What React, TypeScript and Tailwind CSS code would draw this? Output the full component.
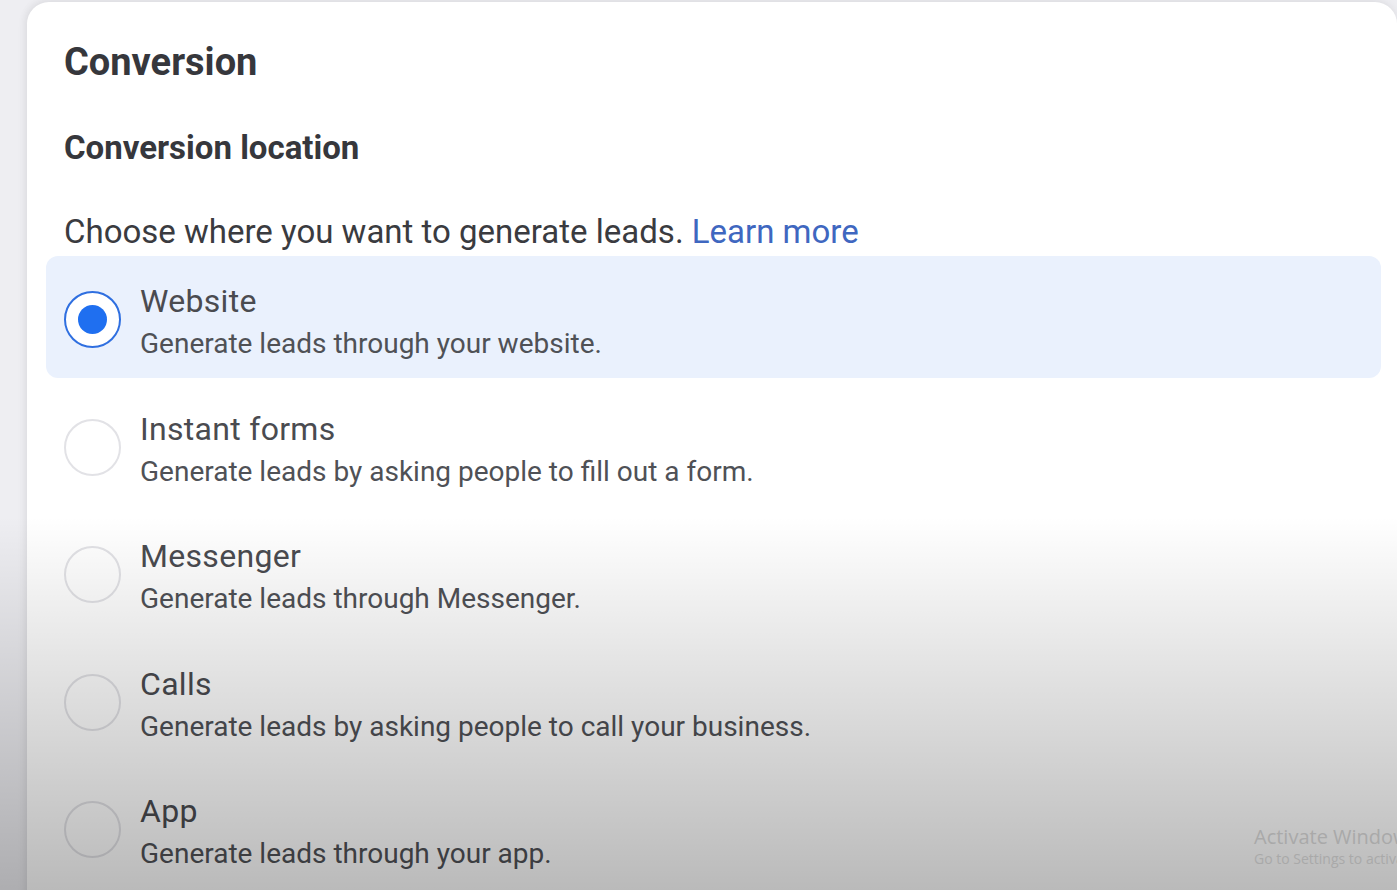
import React from 'react';

type Option = {
  id: string;
  title: string;
  description: string;
};

const options: Option[] = [
  { id: 'website', title: 'Website', description: 'Generate leads through your website.' },
  { id: 'instant-forms', title: 'Instant forms', description: 'Generate leads by asking people to fill out a form.' },
  { id: 'messenger', title: 'Messenger', description: 'Generate leads through Messenger.' },
  { id: 'calls', title: 'Calls', description: 'Generate leads by asking people to call your business.' },
  { id: 'app', title: 'App', description: 'Generate leads through your app.' },
];

function Radio({ checked }: { checked: boolean }) {
  if (checked) {
    return (
      <span className="flex h-[57px] w-[57px] shrink-0 items-center justify-center rounded-full border-[2.5px] border-[#2f6fe0] bg-white">
        <span className="block h-[29px] w-[29px] rounded-full bg-[#1f6ff0]" />
      </span>
    );
  }
  return <span className="block h-[57px] w-[57px] shrink-0 rounded-full border-2 border-[#e2e2e6] bg-white" />;
}

export default function App() {
  const selected = 'website';

  return (
    <div
      className="relative h-[890px] w-full overflow-hidden bg-[#eeeef2] pl-[27px] pt-[2px]"
      style={{ fontFamily: 'Roboto, "Liberation Sans", sans-serif' }}
    >
      <div className="h-[900px] rounded-t-[22px] bg-white pl-[37px] pr-[16px] pt-[37px] shadow-[0_-2px_10px_rgba(0,0,0,0.06),-3px_0_8px_rgba(0,0,0,0.04)]">
        <h1 className="text-[38px] font-bold leading-[46px] text-[#36373c]">Conversion</h1>
        <h2 className="mt-[43px] text-[33px] font-bold leading-[40px] text-[#36373c]">Conversion location</h2>
        <p className="mt-[44px] text-[33px] leading-[40px] text-[#3a3b40]">
          Choose where you want to generate leads.{' '}
          <a className="text-[#3f67c0]" href="#">
            Learn more
          </a>
        </p>

        <div className="-ml-[18px] mt-[4px] flex flex-col gap-[5.5px]">
          {options.map((o) => {
            const isSel = o.id === selected;
            return (
              <div
                key={o.id}
                className={`flex h-[122px] items-start gap-[19px] rounded-[12px] pl-[18px] ${isSel ? 'bg-[#eaf1fd]' : ''}`}
              >
                <div className="pt-[35px]">
                  <Radio checked={isSel} />
                </div>
                <div className="pt-[27px]">
                  <div className="text-[32px] leading-[36px] tracking-[0.3px] text-[#4a4b50]">{o.title}</div>
                  <div className="mt-[8px] text-[28px] leading-[34px] text-[#4f5156]">{o.description}</div>
                </div>
              </div>
            );
          })}
        </div>
      </div>

      <div className="pointer-events-none absolute inset-0 bg-[linear-gradient(to_bottom,rgba(0,0,0,0)_58%,rgba(0,0,0,0.27)_100%)]" />

      <div
        className="pointer-events-none absolute left-[1254px] top-[824px] whitespace-nowrap text-[#a9a9a9]"
        style={{ fontFamily: '"Open Sans", "Noto Sans", sans-serif' }}
      >
        <div className="text-[20px] leading-[26px]">Activate Windows</div>
        <div className="text-[14px] leading-[18px]">Go to Settings to activate Windows.</div>
      </div>
    </div>
  );
}
